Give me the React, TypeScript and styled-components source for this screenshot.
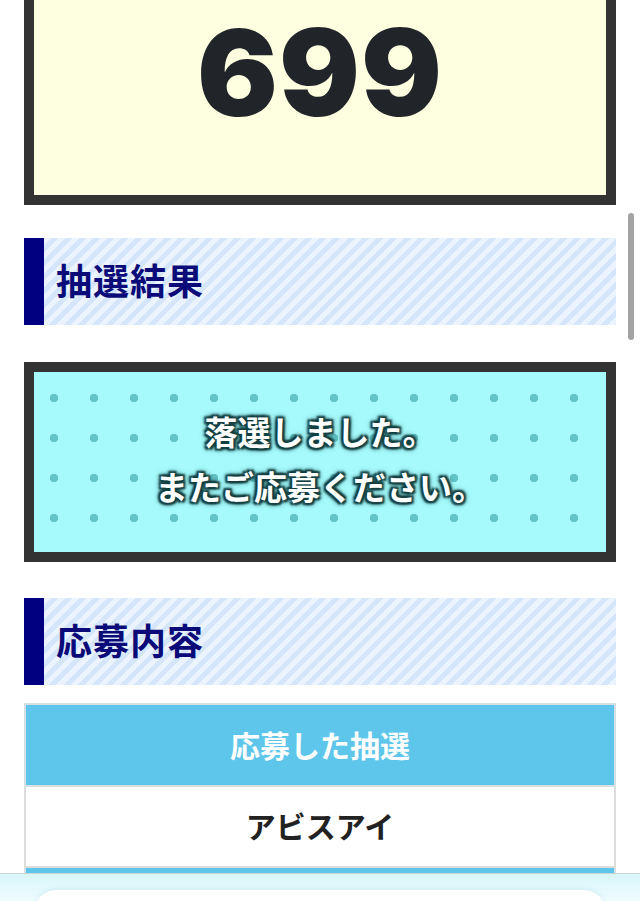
import styled, { createGlobalStyle } from "styled-components";

const GlobalStyle = createGlobalStyle`
  html, body {
    margin: 0;
    padding: 0;
    background: #ffffff;
  }
  body {
    font-family: "Noto Sans CJK JP", "Noto Sans", sans-serif;
    color: #222222;
  }
`;

const Page = styled.main`
  padding: 0 24px 140px;
  display: flex;
  flex-direction: column;
`;

// the lottery number panel, its top edge scrolled out of view
const NumberBox = styled.section`
  box-sizing: content-box;
  height: 182px;
  padding-top: 13px;
  background: #fefee0;
  border: 10px solid #333333;
  border-top: none;
  text-align: center;
`;

const Number = styled.div`
  font-family: "Inter", "Liberation Sans", sans-serif;
  font-weight: 900;
  font-size: 120px;
  line-height: 1;
  color: #212529;
  letter-spacing: 1px;
`;

const SectionTitle = styled.h2<{ $top: number }>`
  margin: ${(p) => p.$top}px 0 0;
  height: 87px;
  box-sizing: border-box;
  display: flex;
  align-items: center;
  padding: 0 0 5px 12px;
  border-left: 20px solid #000080;
  background: repeating-linear-gradient(
    135deg,
    #eaf3fe 0px,
    #eaf3fe 5px,
    #d5e6fb 5px,
    #d5e6fb 10px
  );
  font-size: 36px;
  font-weight: 700;
  color: #0a0a78;
  letter-spacing: 1px;
`;

const ResultBox = styled.section`
  margin-top: 37px;
  box-sizing: content-box;
  height: 174px;
  padding-bottom: 6px;
  border: 10px solid #333333;
  background-color: #a6fafc;
  background-image: radial-gradient(circle, #63c3c6 0 4px, transparent 4.5px);
  background-size: 40px 40px;
  background-position: 0 6px;
  display: flex;
  flex-direction: column;
  align-items: center;
  justify-content: center;
`;

const ResultLine = styled.p`
  margin: 0;
  font-size: 33px;
  font-weight: 700;
  line-height: 55px;
  color: #ffffff;
  text-shadow:
    2px 2px 2px #133f41,
    -2px 2px 2px #133f41,
    2px -2px 2px #133f41,
    -2px -2px 2px #133f41,
    0 0 3px #133f41,
    0 0 5px #1a4d50,
    0 0 7px #24605f;
`;

const EntryTable = styled.table`
  margin-top: 18px;
  width: 100%;
  border-collapse: collapse;
  border: 2px solid #dcdcdc;
`;

const HeadCell = styled.th`
  height: 78px;
  padding: 0 0 2px;
  background: #5ec6ea;
  border: 2px solid #d6dfe3;
  color: #ffffff;
  font-size: 30px;
  font-weight: 700;
  text-align: center;
`;

const BodyCell = styled.td`
  height: 75px;
  padding: 0 0 4px;
  background: #ffffff;
  border: 2px solid #dcdcdc;
  color: #222222;
  font-size: 30px;
  font-weight: 700;
  text-align: center;
`;

const ScrollThumb = styled.div`
  position: fixed;
  top: 213px;
  right: 6px;
  width: 6px;
  height: 127px;
  border-radius: 3px;
  background: #a3a3a3;
`;

const BottomSheet = styled.div`
  position: fixed;
  left: 0;
  right: 0;
  bottom: 0;
  height: 28px;
  padding: 16px 34px 0;
  box-sizing: border-box;
  border-top: 1px solid #c9d3d6;
  background: linear-gradient(180deg, #d9f6fb 0%, #eefcfe 100%);
  overflow: hidden;
`;

const SheetCard = styled.div`
  height: 60px;
  border-radius: 22px;
  background: #ffffff;
  box-shadow: 0 -1px 4px rgba(120, 190, 210, 0.25);
`;

export default function App() {
  return (
    <>
      <GlobalStyle />
      <Page>
        <NumberBox>
          <Number>699</Number>
        </NumberBox>

        <SectionTitle $top={33}>抽選結果</SectionTitle>
        <ResultBox>
          <ResultLine>落選しました。</ResultLine>
          <ResultLine>またご応募ください。</ResultLine>
        </ResultBox>

        <SectionTitle $top={36}>応募内容</SectionTitle>
        <EntryTable>
          <tbody>
            <tr>
              <HeadCell>応募した抽選</HeadCell>
            </tr>
            <tr>
              <BodyCell>アビスアイ</BodyCell>
            </tr>
            <tr>
              <HeadCell />
            </tr>
          </tbody>
        </EntryTable>
      </Page>
      <ScrollThumb />
      <BottomSheet>
        <SheetCard />
      </BottomSheet>
    </>
  );
}
